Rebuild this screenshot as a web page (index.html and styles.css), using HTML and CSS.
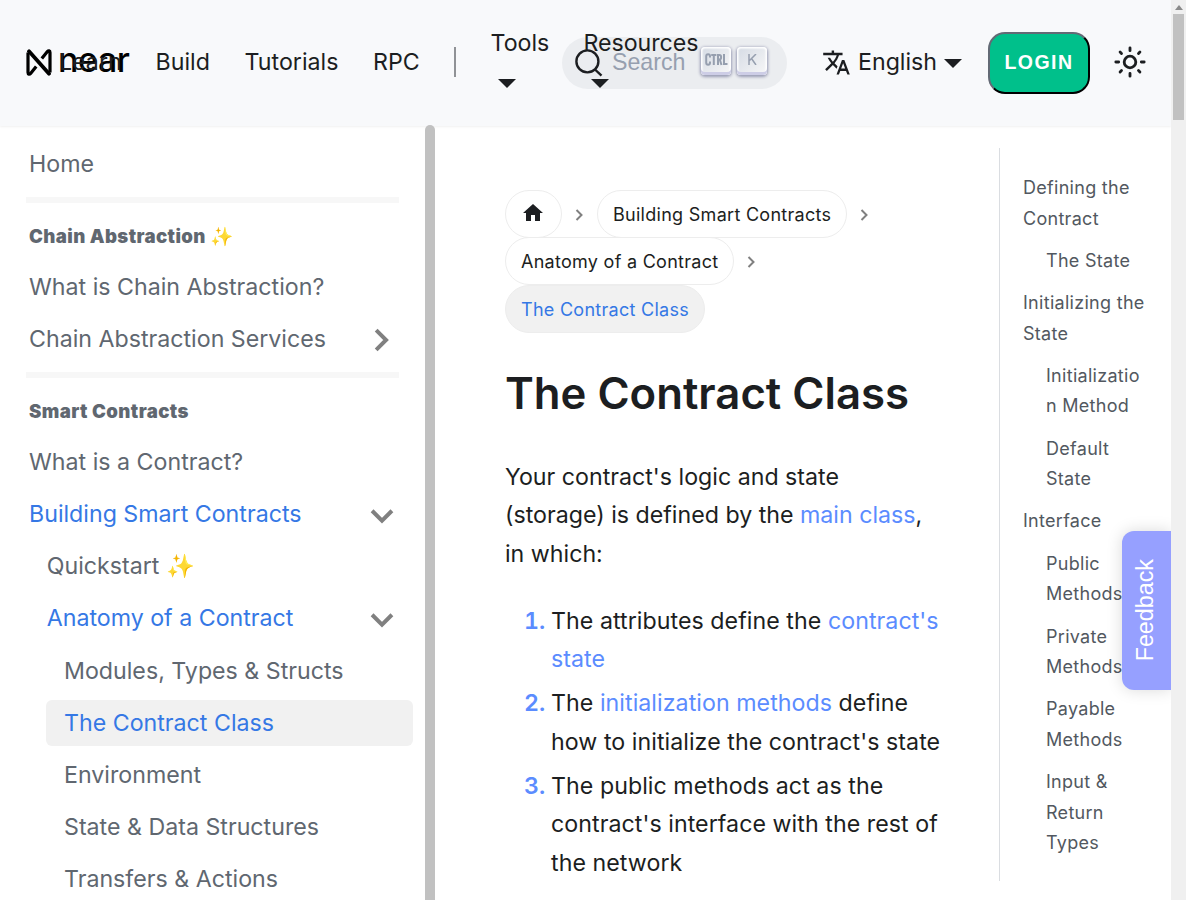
FILE: index.html
```html
<!DOCTYPE html>
<html lang="en">
<head>
<meta charset="utf-8">
<title>The Contract Class</title>
<link rel="stylesheet" href="styles.css">
</head>
<body>
<div class="viewport">
  <div class="page">
    <header class="navbar">
      <a class="brand">
        <svg class="brand-mark" width="26" height="27" viewBox="0 0 26 27"><path d="M2 3.500v20c0 2 1.500 2.200 2.600.900l5.600-7M24 23.500v-20c0-2-1.500-2.200-2.600-.900l-5.600 7" fill="none" stroke="#000" stroke-width="3.200"/><path d="M3 2.300l20 22.400" fill="none" stroke="#000" stroke-width="3.800" stroke-linecap="round"/></svg>
        <span class="brand-name">near</span>
      </a>
      <nav class="nav-left">
        <a class="nav-link learn">Learn</a>
        <a class="nav-link build">Build</a>
        <a class="nav-link tutorials">Tutorials</a>
        <a class="nav-link rpc">RPC</a>
        <span class="divider"></span>
        <a class="nav-drop tools">Tools<i class="caret"></i></a>
        <a class="nav-drop resources">Resources<i class="caret"></i></a>
      </nav>
      <div class="search">
        <svg class="search-icon" width="28" height="28" viewBox="0 0 28 28"><circle cx="12.400" cy="12.400" r="11" fill="none" stroke="#1c1e21" stroke-width="2.400"/><path d="M20 20.500l6.500 6.200" stroke="#1c1e21" stroke-width="2.400"/></svg>
        <span class="placeholder">Search</span>
        <span class="key"><svg width="23" height="13" viewBox="0 0 23 13" fill="none" stroke="#969faf" stroke-width="2"><path d="M5 4.500V3.500c0-3-3.800-3-3.800 0v6c0 3 3.800 3 3.800 0V8.500M6.200 2h5.200M8.800 2v10M13 12V2h1.300c2.400 0 2.400 4.500 0 4.500H13m1.800 0l1.700 5.500M19 1v10h3.500"/></svg></span>
        <span class="key"><svg width="9" height="11" viewBox="0 0 9 11" fill="none" stroke="#969faf" stroke-width="1.500"><path d="M1 0v11M8 0L1 7M3.500 4.500L8 11"/></svg></span>
      </div>
      <a class="lang">
        <svg width="29" height="29" viewBox="0 0 24 24" fill="#1c1e21"><path d="M12.870 15.070l-2.540-2.510.03-.03c1.740-1.940 2.980-4.170 3.710-6.530H17V4h-7V2H8v2H1v1.990h11.170C11.500 7.920 10.440 9.750 9 11.350 8.070 10.320 7.300 9.190 6.690 8h-2c.73 1.630 1.730 3.170 2.980 4.560l-5.090 5.020L4 19l5-5 3.110 3.110.76-2.040zM18.500 10h-2L12 22h2l1.120-3h4.750L21 22h2l-4.500-12zm-2.620 7l1.620-4.330L19.120 17h-3.240z"/></svg>
        <span>English</span><i class="caret"></i>
      </a>
      <button class="login">LOGIN</button>
      <svg class="sun" width="34" height="34" viewBox="0 0 24 24" fill="none" stroke="#1c1e21" stroke-width="2" stroke-linecap="round"><circle cx="12" cy="12" r="4.100"/><path d="M12 2v2M12 20v2M2 12h2M20 12h2M5 5l1 1M18 18l1 1M5 19l1-1M18 6l1-1"/></svg>
    </header>

    <div class="body">
      <aside class="sidebar">
        <div class="menu">
          <a class="item">Home</a>
          <div class="rule"></div>
          <div class="heading">Chain Abstraction ✨</div>
          <a class="item">What is Chain Abstraction?</a>
          <a class="item">Chain Abstraction Services<svg class="chev right" width="34" height="34" viewBox="0 0 24 24"><path d="M10 5l7 7-7 7" fill="none" stroke="#808080" stroke-width="2.800"/></svg></a>
          <div class="rule"></div>
          <div class="heading">Smart Contracts</div>
          <a class="item">What is a Contract?</a>
          <a class="item on">Building Smart Contracts<svg class="chev" width="34" height="34" viewBox="0 0 24 24"><path d="M5 9l7 7 7-7" fill="none" stroke="#808080" stroke-width="2.800"/></svg></a>
          <a class="item l2">Quickstart ✨</a>
          <a class="item l2 on">Anatomy of a Contract<svg class="chev" width="34" height="34" viewBox="0 0 24 24"><path d="M5 9l7 7 7-7" fill="none" stroke="#808080" stroke-width="2.800"/></svg></a>
          <a class="item l3">Modules, Types &amp; Structs</a>
          <a class="item l3 on active">The Contract Class</a>
          <a class="item l3">Environment</a>
          <a class="item l3">State &amp; Data Structures</a>
          <a class="item l3">Transfers &amp; Actions</a>
        </div>
        <div class="side-scroll"></div>
      </aside>

      <main class="doc">
        <div class="crumbs">
          <div class="crumb-row">
            <a class="crumb home"><svg width="24" height="24" viewBox="0 0 24 24" fill="#1c1e21"><path d="M10 20v-6h4v6h5v-8h3L12 3 2 12h3v8z"/></svg></a>
            <svg class="sep" width="9" height="12" viewBox="0 0 9 12"><path d="M1.500 1l5 5-5 5" fill="none" stroke="#808080" stroke-width="2"/></svg>
            <a class="crumb">Building Smart Contracts</a>
            <svg class="sep" width="9" height="12" viewBox="0 0 9 12"><path d="M1.500 1l5 5-5 5" fill="none" stroke="#808080" stroke-width="2"/></svg>
          </div>
          <div class="crumb-row">
            <a class="crumb">Anatomy of a Contract</a>
            <svg class="sep" width="9" height="12" viewBox="0 0 9 12"><path d="M1.500 1l5 5-5 5" fill="none" stroke="#808080" stroke-width="2"/></svg>
          </div>
          <div class="crumb-row"><a class="crumb current">The Contract Class</a></div>
        </div>
        <h1>The Contract Class</h1>
        <p>Your contract's logic and state<br>(storage) is defined by the <a>main class</a>,<br>in which:</p>
        <ol>
          <li><b>1.</b><span>The attributes define the <a>contract's<br>state</a></span></li>
          <li><b>2.</b><span>The <a>initialization methods</a> define<br>how to initialize the contract's state</span></li>
          <li><b>3.</b><span>The public methods act as the<br>contract's interface with the rest of<br>the network</span></li>
        </ol>
      </main>

      <nav class="toc">
        <a>Defining the<br>Contract</a>
        <a class="sub">The State</a>
        <a>Initializing the<br>State</a>
        <a class="sub">Initializatio<br>n Method</a>
        <a class="sub">Default<br>State</a>
        <a>Interface</a>
        <a class="sub">Public<br>Methods</a>
        <a class="sub">Private<br>Methods</a>
        <a class="sub">Payable<br>Methods</a>
        <a class="sub">Input &amp;<br>Return<br>Types</a>
      </nav>
    </div>
    <div class="feedback"><span>Feedback</span></div>
  </div>
  <div class="scrollbar"><i class="arrow"></i><div class="thumb"></div></div>
</div>
</body>
</html>
```
FILE: styles.css
```css
* { box-sizing: border-box; }
body { margin: 0; background: #fff; font: 23.200px/1.65 Inter, "Noto Sans", sans-serif; color: #1c1e21; }
.viewport { display: flex; width: 1186px; height: 900px; overflow: hidden; }
.page { position: relative; width: 1171px; height: 900px; overflow: hidden; }
.scrollbar { width: 15px; background: #f0f0f0; display: flex; flex-direction: column; align-items: center; }
.arrow { border: 4px solid transparent; border-top: 0; border-bottom: 5px solid #8a8a8a; margin-top: 5px; }
.thumb { width: 11px; height: 106px; margin-top: 4px; background: #c1c1c1; }

/* navbar */
.navbar { position: relative; z-index: 1; display: flex; align-items: center; height: 126px; padding: 0 0 2px 26px; background: #f8f9fb; box-shadow: 0 1px 2px rgba(0,0,0,.06); white-space: nowrap; }
.brand { display: flex; align-items: center; width: 33px; }
.brand-mark { flex: none; margin-top: 1px; }
.brand-name { margin: -5px 0 0 6px; font-size: 34px; line-height: 40px; font-weight: 550; letter-spacing: -.400px; color: #000; }
.nav-left { display: flex; align-items: center; width: 503px; flex: none; }
.nav-link { flex: none; }
.learn { width: 96.600px; }
.build { width: 89px; }
.tutorials { width: 128.400px; }
.rpc { width: 81px; }
.divider { flex: none; width: 2px; height: 30px; background: #909296; margin-right: 34.600px; }
.nav-drop { position: relative; z-index: 2; display: flex; flex-direction: column; flex: none; gap: 17px; line-height: 38px; margin-top: -12px; letter-spacing: -.050px; }
.nav-drop .caret { margin-left: 7px; }
.tools { width: 93px; }
.caret { display: block; width: 0; border: 9px solid transparent; border-top-color: #1c1e21; border-bottom: 0; }
.search { display: flex; align-items: center; flex: none; width: 225px; height: 52px; margin-top: 2px; padding-left: 13px; border-radius: 26px; background: #ebedf0; }
.placeholder { width: 89px; margin: -1px 0 0 9px; color: #969faf; font-family: "Liberation Sans", Arial, sans-serif; }
.key { display: flex; align-items: center; justify-content: center; width: 30px; height: 28px; margin: -4px 6px 0 0; padding-bottom: 3px; border-radius: 4px; background: linear-gradient(-225deg, #d5dbe4, #f8f8f8); box-shadow: inset 0 -3px 0 0 #cdcde6, inset 0 0 1.500px 1.500px #fff, 0 1px 3px 1px rgba(30,35,90,.4); }
.lang { display: flex; align-items: center; width: 166px; flex: none; margin-left: 35px; }
.lang span { margin: 0 7px 0 7px; }
.lang .caret { margin-top: 2px; }
.login { flex: none; width: 102px; height: 62px; margin-top: 2px; padding: 0 0 2px; border: 2px outset #1c1e21; border-radius: 17px; background: #00c08b; color: #fff; font: bold 19.500px "Liberation Sans", Arial, sans-serif; letter-spacing: 1.500px; }
.sun { flex: none; margin: 0 0 0 22.500px; }

.body { display: flex; height: 774px; }

/* sidebar */
.sidebar { display: flex; width: 435px; flex: none; }
.menu { width: 425px; padding: 15px 12px 0 12px; color: #606770; }
.item { display: flex; align-items: center; height: 46.400px; margin-bottom: 5.800px; padding-left: 17px; }
.chev { margin: 1px 14.500px 0 auto; }
.right { margin-right: 17px; }
.rule { width: 373px; height: 6px; margin: 9.400px 0 10px 14px; background: #f7f7f7; }
.heading { height: 45px; line-height: 46px; margin-bottom: 6px; padding-left: 17px; font-size: 18.600px; font-weight: 900; letter-spacing: .400px; }
.on { color: #3578e5; }
.l2 { padding-left: 34.700px; }
.l3 { margin-left: 34px; padding-left: 18px; }
.active { background: #f1f1f1; border-radius: 6px; }
.side-scroll { width: 10px; height: 800px; margin-top: -1px; position: relative; z-index: 3; background: #c1c1c1; border-radius: 5px; }

/* article */
.doc { width: 564px; flex: none; padding: 64px 0 0 70px; white-space: nowrap; }
.crumb-row { display: flex; align-items: center; height: 47.500px; }
.crumb { display: flex; align-items: center; height: 48px; padding: 2px 15px 0; border: 1px solid #ededed; border-radius: 24px; font-size: 18px; letter-spacing: .280px; }
.crumb.home { width: 57px; padding: 0 2px 2px 0; justify-content: center; }
.sep { margin: 2px 13px 0 13px; }
.current { background: #f1f1f1; color: #3578e5; }
h1 { margin: 33px 0 36.500px; font-size: 43.700px; line-height: 56px; font-weight: 600; }
p { margin: 0 0 28.400px; line-height: 38.400px; }
.doc p a, li a { color: #5b8cff; }
ol { margin: 0; padding: 0 0 0 19px; list-style: none; }
li { display: flex; margin-bottom: 5.800px; line-height: 38.400px; letter-spacing: .050px; }
li b { width: 27px; font-weight: 600; font-variant-numeric: tabular-nums; color: #5b8cff; }

/* contents */
.toc { display: flex; flex-direction: column; width: 172px; height: 733px; margin-top: 22px; padding: 25px 0 0 23px; border-left: 1px solid #dadde1; gap: 11.800px; font-size: 18px; letter-spacing: .290px; line-height: 30.500px; color: #525860; }
.sub { padding-left: 23px; }

.feedback { position: absolute; z-index: 4; right: 0; top: 531px; width: 49px; height: 159px; display: flex; align-items: center; justify-content: center; background: #96a0ff; border-radius: 12px 0 0 12px; box-shadow: 0 0 16px rgba(0,0,0,.15); color: #fff; font: 23.300px "Liberation Sans", Arial, sans-serif; }
.feedback span { writing-mode: vertical-rl; transform: rotate(180deg); margin-right: 2px; }
```
